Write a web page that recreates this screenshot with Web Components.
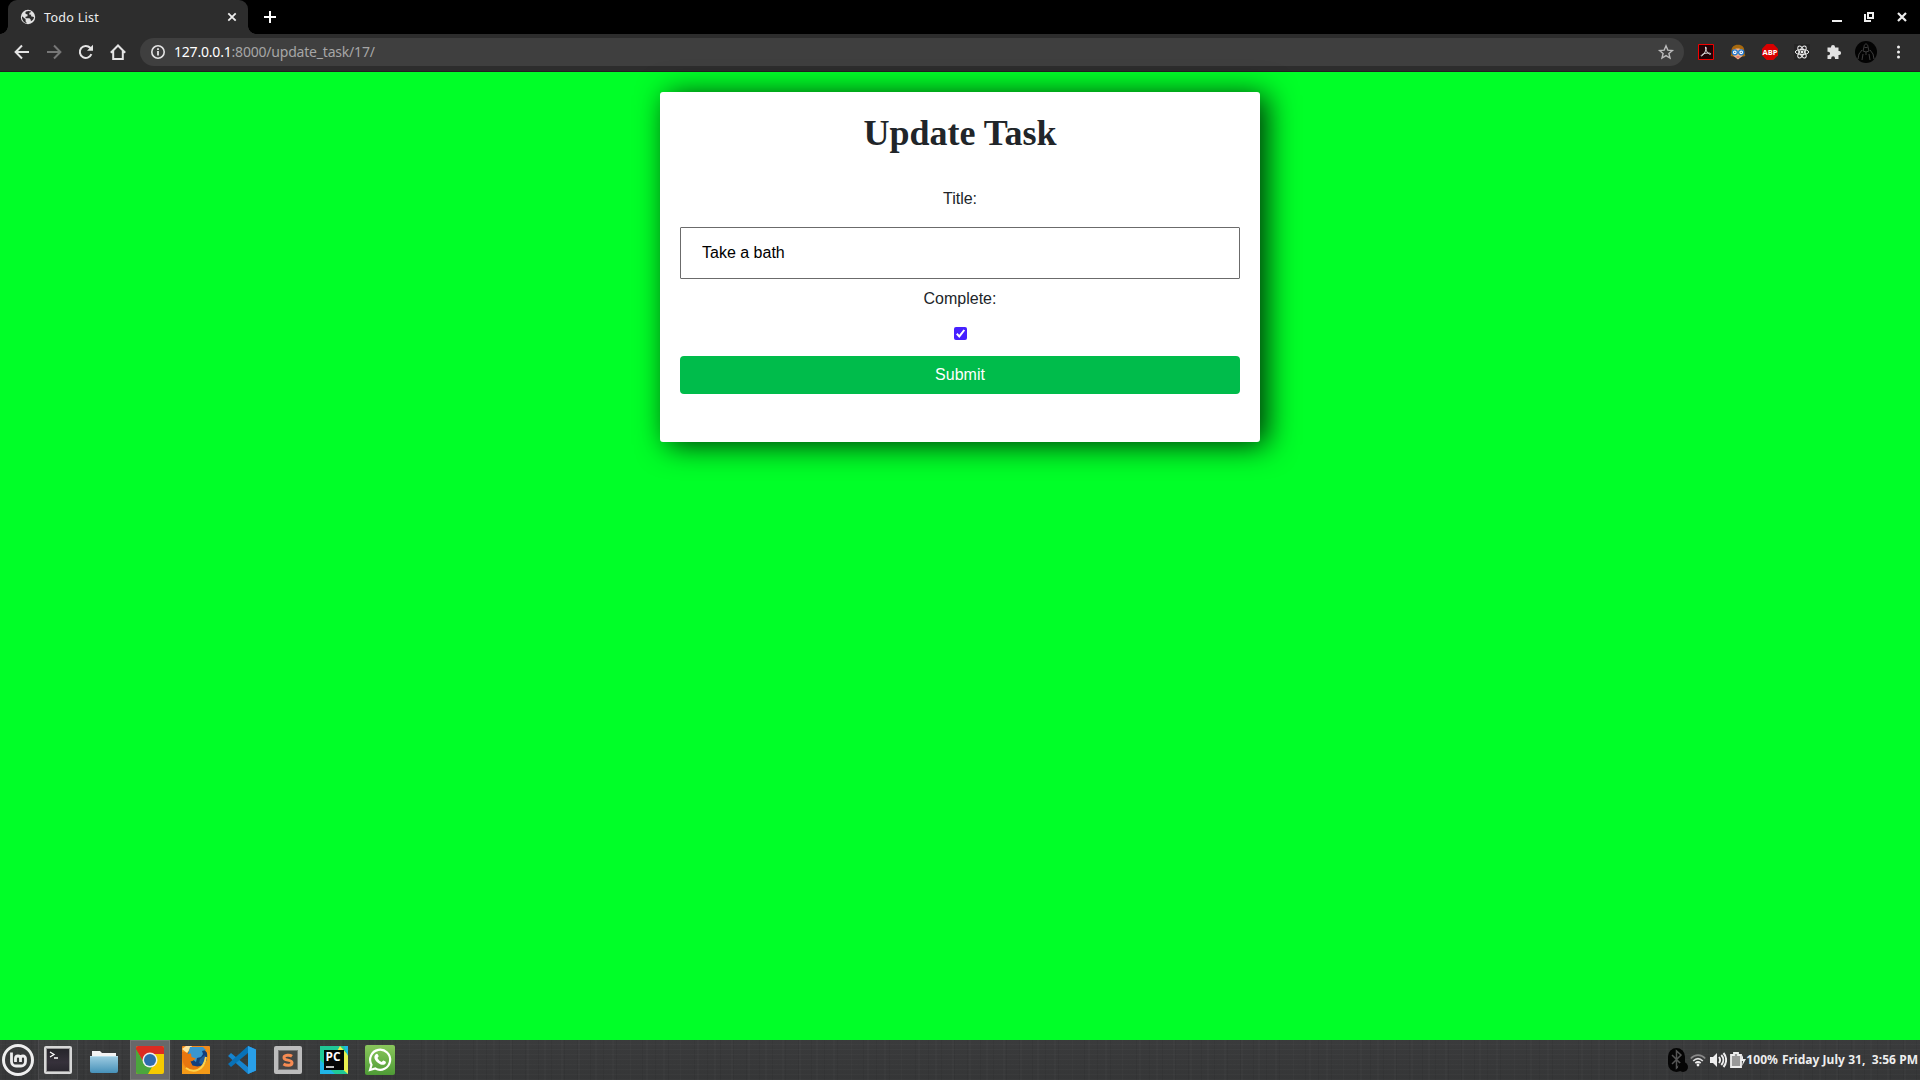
<!DOCTYPE html>
<html lang="en"><head><meta charset="utf-8"><title>Todo List</title>
<style>
html,body{margin:0;height:100%;overflow:hidden}
body{display:flex;flex-direction:column;width:1920px;height:1080px;font-family:"Noto Sans","Open Sans",sans-serif}
</style></head><body>
<tab-strip>Todo List</tab-strip>
<nav-bar></nav-bar>
<page-view>
<task-card>Update Task</task-card>
</page-view>
<task-bar></task-bar>
<script>
const define=(name,html)=>customElements.define(name,class extends HTMLElement{
 constructor(){super();const t=document.createElement('template');t.innerHTML=html;
 this.attachShadow({mode:'open'}).append(t.content.cloneNode(true));}});

define('tab-strip',`<style>
:host{display:flex;flex:none;height:34px;background:#000;color:#eee;align-items:stretch}
.tab{margin-left:8px;width:240px;background:#2d2d2d;border-radius:9px 9px 0 0;display:flex;align-items:center;box-sizing:border-box;padding:0 11px 0 12px;position:relative}
.tab:before,.tab:after{content:"";position:absolute;bottom:0;width:8px;height:8px}
.tab:before{left:-8px;background:radial-gradient(circle at 0 0,#000 7.5px,#2d2d2d 8px)}
.tab:after{right:-8px;background:radial-gradient(circle at 100% 0,#000 7.5px,#2d2d2d 8px)}
.t{font-size:12.5px;margin-left:8px;flex:1;letter-spacing:.3px;white-space:nowrap}
svg{display:block;flex:none}
.new{margin:11px 0 0 16px}
.win{margin-left:auto;display:flex;gap:20px;padding:11px 12px 0 0}
.win svg:last-child{margin-left:1px}
</style>
<div class="tab"><svg width="16" height="16" viewBox="0 0 16 16"><circle cx="8" cy="8" r="7.2" fill="#e2e2e2"/><path d="M2 7.2l3.600 3.100v2.200l1.400 1.700C4 13.900 1.700 11 2 7.200zM6.200 2.500c-1 .6-1.100 1.900-.2 2.500l1.600.5-.1 1.700-2 .6v1.400h4l1.300 1.500v1.500c1.900-.8 3.200-2.300 3.200-4.200L11 7.300l.2-1.500-2-.2.2-1.800c1-.1 1.700-.5 1.700-1.200C9.500 1.700 7.700 1.700 6.200 2.500z" fill="#2d2d2d"/></svg>
<span class="t"><slot></slot></span>
<svg width="10" height="10" viewBox="0 0 10 10"><path d="M1.300 1.300l7.400 7.400M8.700 1.300L1.300 8.700" stroke="#eee" stroke-width="1.800"/></svg></div>
<svg class="new" width="12" height="12" viewBox="0 0 12 12"><path d="M6 0v12M0 6h12" stroke="#fff" stroke-width="2"/></svg>
<div class="win">
<svg width="12" height="12" viewBox="0 0 12 12"><path d="M1 10h10" stroke="#eee" stroke-width="2"/></svg>
<svg width="12" height="12" viewBox="0 0 12 12"><path d="M5 2h5v5H5zM2 3v7h6" fill="none" stroke="#eee" stroke-width="2"/></svg>
<svg width="12" height="12" viewBox="0 0 12 12"><path d="M2 2l8 8M10 2l-8 8" stroke="#eee" stroke-width="2.200"/></svg>
</div>`);

define('nav-bar',`<style>
:host{display:flex;flex:none;height:38px;box-sizing:border-box;background:#2d2d2d;border-bottom:1px solid #222;align-items:center;padding:0 11px 1px 14px}
svg{display:block;flex:none;overflow:visible}
.nav{display:flex;gap:16px}
.url{margin-left:14px;width:1544px;height:28px;box-sizing:border-box;border-radius:14px;background:#3f3f3f;display:flex;align-items:center;padding:0 10px}
.a{margin-left:8px;padding-bottom:1px;flex:1;font-size:14px;color:#a6a6a6;letter-spacing:-.2px;white-space:nowrap}
.a b{font-weight:400;color:#fff}
.ext{margin-left:14px;display:flex;gap:16px;align-items:center}
</style>
<div class="nav">
<svg width="16" height="16" viewBox="0 0 16 16"><path d="M15 8H2M8 1.500L1.600 8 8 14.500" fill="none" stroke="#e4e4e4" stroke-width="2"/></svg>
<svg width="16" height="16" viewBox="0 0 16 16"><path d="M1 8h13M8 1.500L14.400 8 8 14.500" fill="none" stroke="#777" stroke-width="2"/></svg>
<svg width="16" height="16" viewBox="0 0 16 16"><path d="M13.400 10.200A6 6 0 1 1 12.200 3.800L13.600 5.200" fill="none" stroke="#e4e4e4" stroke-width="2"/><path d="M15 .8v6H9z" fill="#e4e4e4"/></svg>
<svg width="16" height="16" viewBox="0 0 16 16"><path d="M.8 8.700L8 1.500l7.200 7.200M3.200 7v8h9.600V7" fill="none" stroke="#e4e4e4" stroke-width="2"/></svg>
</div>
<div class="url"><svg width="16" height="16" viewBox="0 0 16 16"><circle cx="8" cy="8" r="6.200" fill="none" stroke="#e4e4e4" stroke-width="1.600"/><path d="M8 7v4.500M8 4.300v1.800" stroke="#e4e4e4" stroke-width="1.800"/></svg>
<span class="a"><b>127.0.0.1</b>:8000/update_task/17/</span>
<svg width="16" height="16" viewBox="0 0 16 16"><path d="M8 1.800l1.800 4.300 4.600.4-3.500 3 1.100 4.500L8 11.600 4 14l1.100-4.500-3.500-3 4.600-.4z" fill="none" stroke="#bbb" stroke-width="1.400"/></svg></div>
<div class="ext">
<svg width="16" height="16" viewBox="0 0 16 16"><path d="M.5.5h15v15H.5z" fill="#220308" stroke="#f00000"/><path d="M7.500 3c1.500 0 .7 3-1 6S3 12.500 3.200 11.600c.5-1.500 4-2.600 7-2.600 2.600 0 3.200 1.200 2 1.300C10.500 10.400 7 6 7.500 3z" fill="none" stroke="#ddd"/></svg>
<svg width="16" height="16" viewBox="0 0 16 16"><path d="M1.500 8C1 3 4 .7 8 .7S14.700 3 14.300 8l1 4-2 .5H3L.7 12z" fill="#a6690f"/><path d="M3 6c2-2 7-2 10 0l-.5 6L8 15.500 3.500 12z" fill="#f1b28a"/><circle cx="4.800" cy="8.300" r="2.500" fill="#fff" stroke="#1f77d0" stroke-width="1.300"/><circle cx="11.200" cy="8.300" r="2.500" fill="#fff" stroke="#1f77d0" stroke-width="1.300"/><path d="M4.300 8.300h1M10.700 8.300h1" stroke="#15478c" stroke-width="1.200"/><path d="M6.500 13h3" stroke="#c45"/></svg>
<svg width="16" height="16" viewBox="0 0 16 16"><path d="M4.700 0h6.600L16 4.700v6.600L11.300 16H4.700L0 11.300V4.700z" fill="#d80000"/><text x="8" y="10.800" text-anchor="middle" font-family="Open Sans,sans-serif" font-size="7.500" font-weight="700" fill="#fff">ABP</text></svg>
<svg width="16" height="16" viewBox="0 0 16 16"><path d="M0 0h16v16H0z" fill="#252525"/><g fill="none" stroke="#eee"><ellipse cx="8" cy="8" rx="6.700" ry="2.600"/><ellipse cx="8" cy="8" rx="6.700" ry="2.600" transform="rotate(60 8 8)"/><ellipse cx="8" cy="8" rx="6.700" ry="2.600" transform="rotate(120 8 8)"/></g><circle cx="8" cy="8" r="1.400" fill="#eee"/></svg>
<svg width="16" height="16" viewBox="0 0 16 16"><path d="M1.500 3.500H5V3a2 2 0 0 1 4 0v.5h3.500V7h.6a2 2 0 0 1 0 4h-.6v4H9v-.8a1.900 1.900 0 0 0-3.800 0v.8H1.500v-3.700h.8a1.800 1.800 0 0 0 0-3.600h-.8z" fill="#e2e2e2"/></svg>
<svg style="margin:0 -3px" width="22" height="22" viewBox="0 0 22 22"><circle cx="11" cy="11" r="11" fill="#030303"/><path d="M9 6c0-4 4-4 4 0l1 4-3 1-3-1zM7 9l-3 4-1 5M15 9l3 4 1 5M8 13l-1 6M14 13l1 6M9.500 6.500h3M11 11v3" fill="none" stroke="#444" stroke-width=".9"/></svg>
<svg width="16" height="16" viewBox="0 0 16 16"><g fill="#eee"><circle cx="8.500" cy="3" r="1.500"/><circle cx="8.500" cy="8" r="1.500"/><circle cx="8.500" cy="13" r="1.500"/></g></svg>
</div>`);

define('page-view',`<style>:host{display:flex;flex:1;min-height:0;background:#00ff28;justify-content:center;align-items:flex-start;padding-top:20px}</style><slot></slot>`);

define('task-card',`<style>
:host{display:flex;flex-direction:column;width:600px;height:350px;box-sizing:border-box;padding:20px;background:#fff;border-radius:3px;box-shadow:7px 3px 30px rgba(0,0,0,.82);font:16px/24px "Liberation Sans",Arial,sans-serif;color:#212529;text-align:center}
h1{font:bold 36px/43px "Liberation Serif",serif;margin:0 0 32px}
label{height:24px}
input[type=text]{display:block;width:560px;height:52px;box-sizing:border-box;margin:16px 0 8px;padding:12px 21px;border:1px solid #6b6b6b;border-radius:1px;font:16px "Liberation Sans",Arial,sans-serif;color:#000;background:#fff}
.chk{display:block;margin:16px 0 16px 273.5px}
button{height:38px;border:0;border-radius:4px;background:#00bc4b;color:#fff;font:16px/24px "Liberation Sans",Arial,sans-serif;padding:0}
</style>
<h1><slot></slot></h1>
<label>Title:</label><input type="text" value="Take a bath">
<label>Complete:</label>
<svg class="chk" width="13" height="13" viewBox="0 0 13 13"><rect width="13" height="13" rx="2" fill="#4621ff"/><path d="M2.800 6.800l2.500 2.600L10.300 3" fill="none" stroke="#fff" stroke-width="2"/></svg>
<button>Submit</button>`);

define('task-bar',`<style>
:host{display:flex;flex:none;height:40px;align-items:center;color:#eee;
background:repeating-linear-gradient(90deg,transparent 0 5px,rgba(0,0,0,.05) 5px 6px,transparent 6px 13px),repeating-linear-gradient(90deg,rgba(255,255,255,.015) 0 2px,transparent 2px 17px),repeating-linear-gradient(0deg,rgba(255,255,255,.02) 0 1px,transparent 1px 5px),linear-gradient(#3a3b3c,#353637)}
svg{display:block;flex:none}
.i{width:40px;height:40px;box-sizing:border-box;display:flex;align-items:center;justify-content:center;margin-right:6px}
.open{border:1px solid #4b4b4d;border-top:0;background:#ffffff08}
.on{background:#68686a;border:1px solid #777}
.mint{margin:0 2px}
.tray{margin-left:auto;display:flex;align-items:center;font-weight:700;font-size:12px;white-space:nowrap;padding-right:2px}
.tray span{padding-bottom:2px;letter-spacing:.05px}
</style>
<svg class="mint" width="34" height="34" viewBox="0 0 34 34"><circle cx="16" cy="17" r="14.500" fill="none" stroke="#eee" stroke-width="3"/><path d="M9.500 9.500v9a4.500 4.500 0 0 0 4.500 4.500h5a4.500 4.500 0 0 0 4.500-4.500v-3a2.500 2.500 0 0 0-5 0V19v-3.500a2.500 2.500 0 0 0-5 0V19" fill="none" stroke="#eee" stroke-width="2.800"/></svg>
<div class="i open"><svg width="28" height="28" viewBox="0 0 28 28"><defs><linearGradient id="tg" x2="0" y2="1"><stop stop-color="#25242a"/><stop offset=".6" stop-color="#36313b"/><stop offset="1" stop-color="#29272e"/></linearGradient></defs><rect width="28" height="28" rx="2" fill="#d7d7d7"/><rect x="2.500" y="2.500" width="23" height="23" fill="url(#tg)" stroke="#999"/><path d="M6 6l4 2.500L6 11M10 12h4" fill="none" stroke="#fff" stroke-width="1.300"/></svg></div>
<div class="i"><svg width="28" height="28" viewBox="0 0 28 28"><defs><linearGradient id="fg" x2="0" y2="1"><stop stop-color="#9fcce2"/><stop offset="1" stop-color="#4691b9"/></linearGradient></defs><path d="M2 10V5h8l2 2h14v4z" fill="#f3f3f3"/><path d="M0 10h28v15a2 2 0 0 1-2 2H2a2 2 0 0 1-2-2z" fill="url(#fg)"/><path d="M0 10.500h28" stroke="#b9dded"/></svg></div>
<div class="i on"><svg width="28" height="28" viewBox="0 0 28 28"><clipPath id="cc"><rect width="28" height="28" rx="2"/></clipPath><g clip-path="url(#cc)"><path d="M0 0h28v28H0z" fill="#f5c900"/><path d="M0 0h28v8H14L8 17 0 4z" fill="#dc2b22"/><path d="M0 3l8 14 8 4-4 7H0z" fill="#4ba63c"/></g><circle cx="14" cy="14" r="7.500" fill="#eee"/><circle cx="14" cy="14" r="6" fill="#2e6cad"/></svg></div>
<div class="i"><svg width="28" height="28" viewBox="0 0 28 28"><rect width="28" height="28" rx="1" fill="#f28a18"/><path d="M0 3l4-3h6L5 7z" fill="#ffe3a0"/><circle cx="15.500" cy="12.500" r="11" fill="#153f7c"/><path d="M8 1h13l3 3-4 1 1 3-2 3-4 1-1 4-4-3-4-5z" fill="#3996cf"/><path d="M18 13l5-4 1 5-3 5-4-2z" fill="#225c9d"/><path d="M0 6c2 0 4 0 6 2l3-.5.500 3.500 4.500 1.500-3.500 2.500-2 .5 2 4 5 1 5-1c-2 4-7 6-12 4C3 22 0 16 0 10z" fill="#e8760f"/><path d="M0 17c3 8 14 10 20 4 4-4 6-8 5-15l3 3v19H0z" fill="#f49a17"/><path d="M4 22c8 6 18 2 20-11" fill="none" stroke="#ffd34b" stroke-width="2"/></svg></div>
<div class="i"><svg width="28" height="28" viewBox="0 0 28 28"><path d="M20 0l8 3.500v21L20 28 0 10l3-3 17 14z" fill="#1684cf"/><path d="M20 0v7L3 21l-3-3z" fill="#0872b8"/><path d="M20 0l8 3.500v21L20 28z" fill="#299fe9"/></svg></div>
<div class="i"><svg width="28" height="28" viewBox="0 0 28 28"><rect width="28" height="28" rx="2" fill="#bcbcbc"/><rect x="4.500" y="4.500" width="19" height="19" fill="#464646" stroke="#777"/><path d="M18 10.200c-2-1.400-8-1.400-8 1.500 0 3.300 8 1.500 8 5 0 3.500-6 3-8.500 1.300" fill="none" stroke="#f78b52" stroke-width="3"/></svg></div>
<div class="i"><svg width="28" height="28" viewBox="0 0 28 28"><path d="M0 0h28v28H0z" fill="#20c997"/><path d="M20 0l8 9v19L12 14z" fill="#e9ef4e"/><path d="M24 0h4v10z" fill="#20b6e8"/><path d="M0 14l15 14H0z" fill="#20b6e8"/><path d="M4 4h20v20H4z" fill="#050505"/><text x="5.500" y="14.500" textLength="15" lengthAdjust="spacingAndGlyphs" font-family="Open Sans,sans-serif" font-weight="700" font-size="11.500" fill="#fff">PC</text><path d="M6 21h8" stroke="#fff" stroke-width="1.500"/></svg></div>
<div class="i"><svg width="30" height="30" viewBox="0 0 30 30"><defs><linearGradient id="wg" x2="0" y2="1"><stop stop-color="#8ac75c"/><stop offset="1" stop-color="#4e9b36"/></linearGradient></defs><rect width="30" height="30" rx="2" fill="url(#wg)"/><path d="M5 25l1.500-5.200A10 10 0 1 1 10.300 23.500z" fill="none" stroke="#fff" stroke-width="2.200"/><path d="M10.500 9.500c1.500-1.700 2.500-.5 3.200 1.700L12.500 13c1 2 2.200 3.200 4.200 4l1.500-1.500c2 .8 3.300 1.200 2.500 2.700-1.500 2.500-4.500 2-7.500-.2-3.500-2.700-5-6-2.700-8.500z" fill="#fff"/></svg></div>
<div class="tray">
<svg width="20" height="26" viewBox="0 0 20 26"><rect y="1" width="17" height="24" rx="8.500" fill="#050505"/><path d="M4 8l9 9-4.500 4V4L13 8l-9 9" fill="none" stroke="#555" stroke-width="1.500"/><circle cx="15" cy="20" r="5" fill="#050505"/></svg>
<svg style="margin-left:2px" width="16" height="14" viewBox="0 0 16 14"><g fill="none" stroke-width="1.700"><path d="M.8 5.500c4-4.500 10.400-4.500 14.400 0" stroke="#888"/><path d="M3.200 8c3-3 6.600-3 9.600 0" stroke="#ddd"/><path d="M5.300 10.200c1.700-1.500 3.700-1.500 5.400 0" stroke="#eee"/></g><circle cx="8" cy="12" r="1.400" fill="#eee"/></svg>
<svg style="margin-left:4px" width="17" height="16" viewBox="0 0 17 16"><path d="M0 5h3l4-4v14l-4-4H0z" fill="#eee"/><path d="M9 5c1.500 2 1.500 4 0 6M11.300 3c2.700 3 2.700 7 0 10M13.500 1c3.500 4 3.500 10 0 14" fill="none" stroke="#eee" stroke-width="1.900"/></svg>
<svg style="margin-left:3px" width="16" height="16" viewBox="0 0 16 16"><path d="M1 3h3V1h4v2h3v12H1z" fill="#999" stroke="#eee" stroke-width="1.800"/><path d="M13 3l-3 6h3l-1 5 4-7h-3z" fill="#eee"/></svg>
<span>100%</span><span style="margin-left:4px;white-space:pre">Friday July 31,  3:56 PM</span>
</div>`);
</script></body></html>
